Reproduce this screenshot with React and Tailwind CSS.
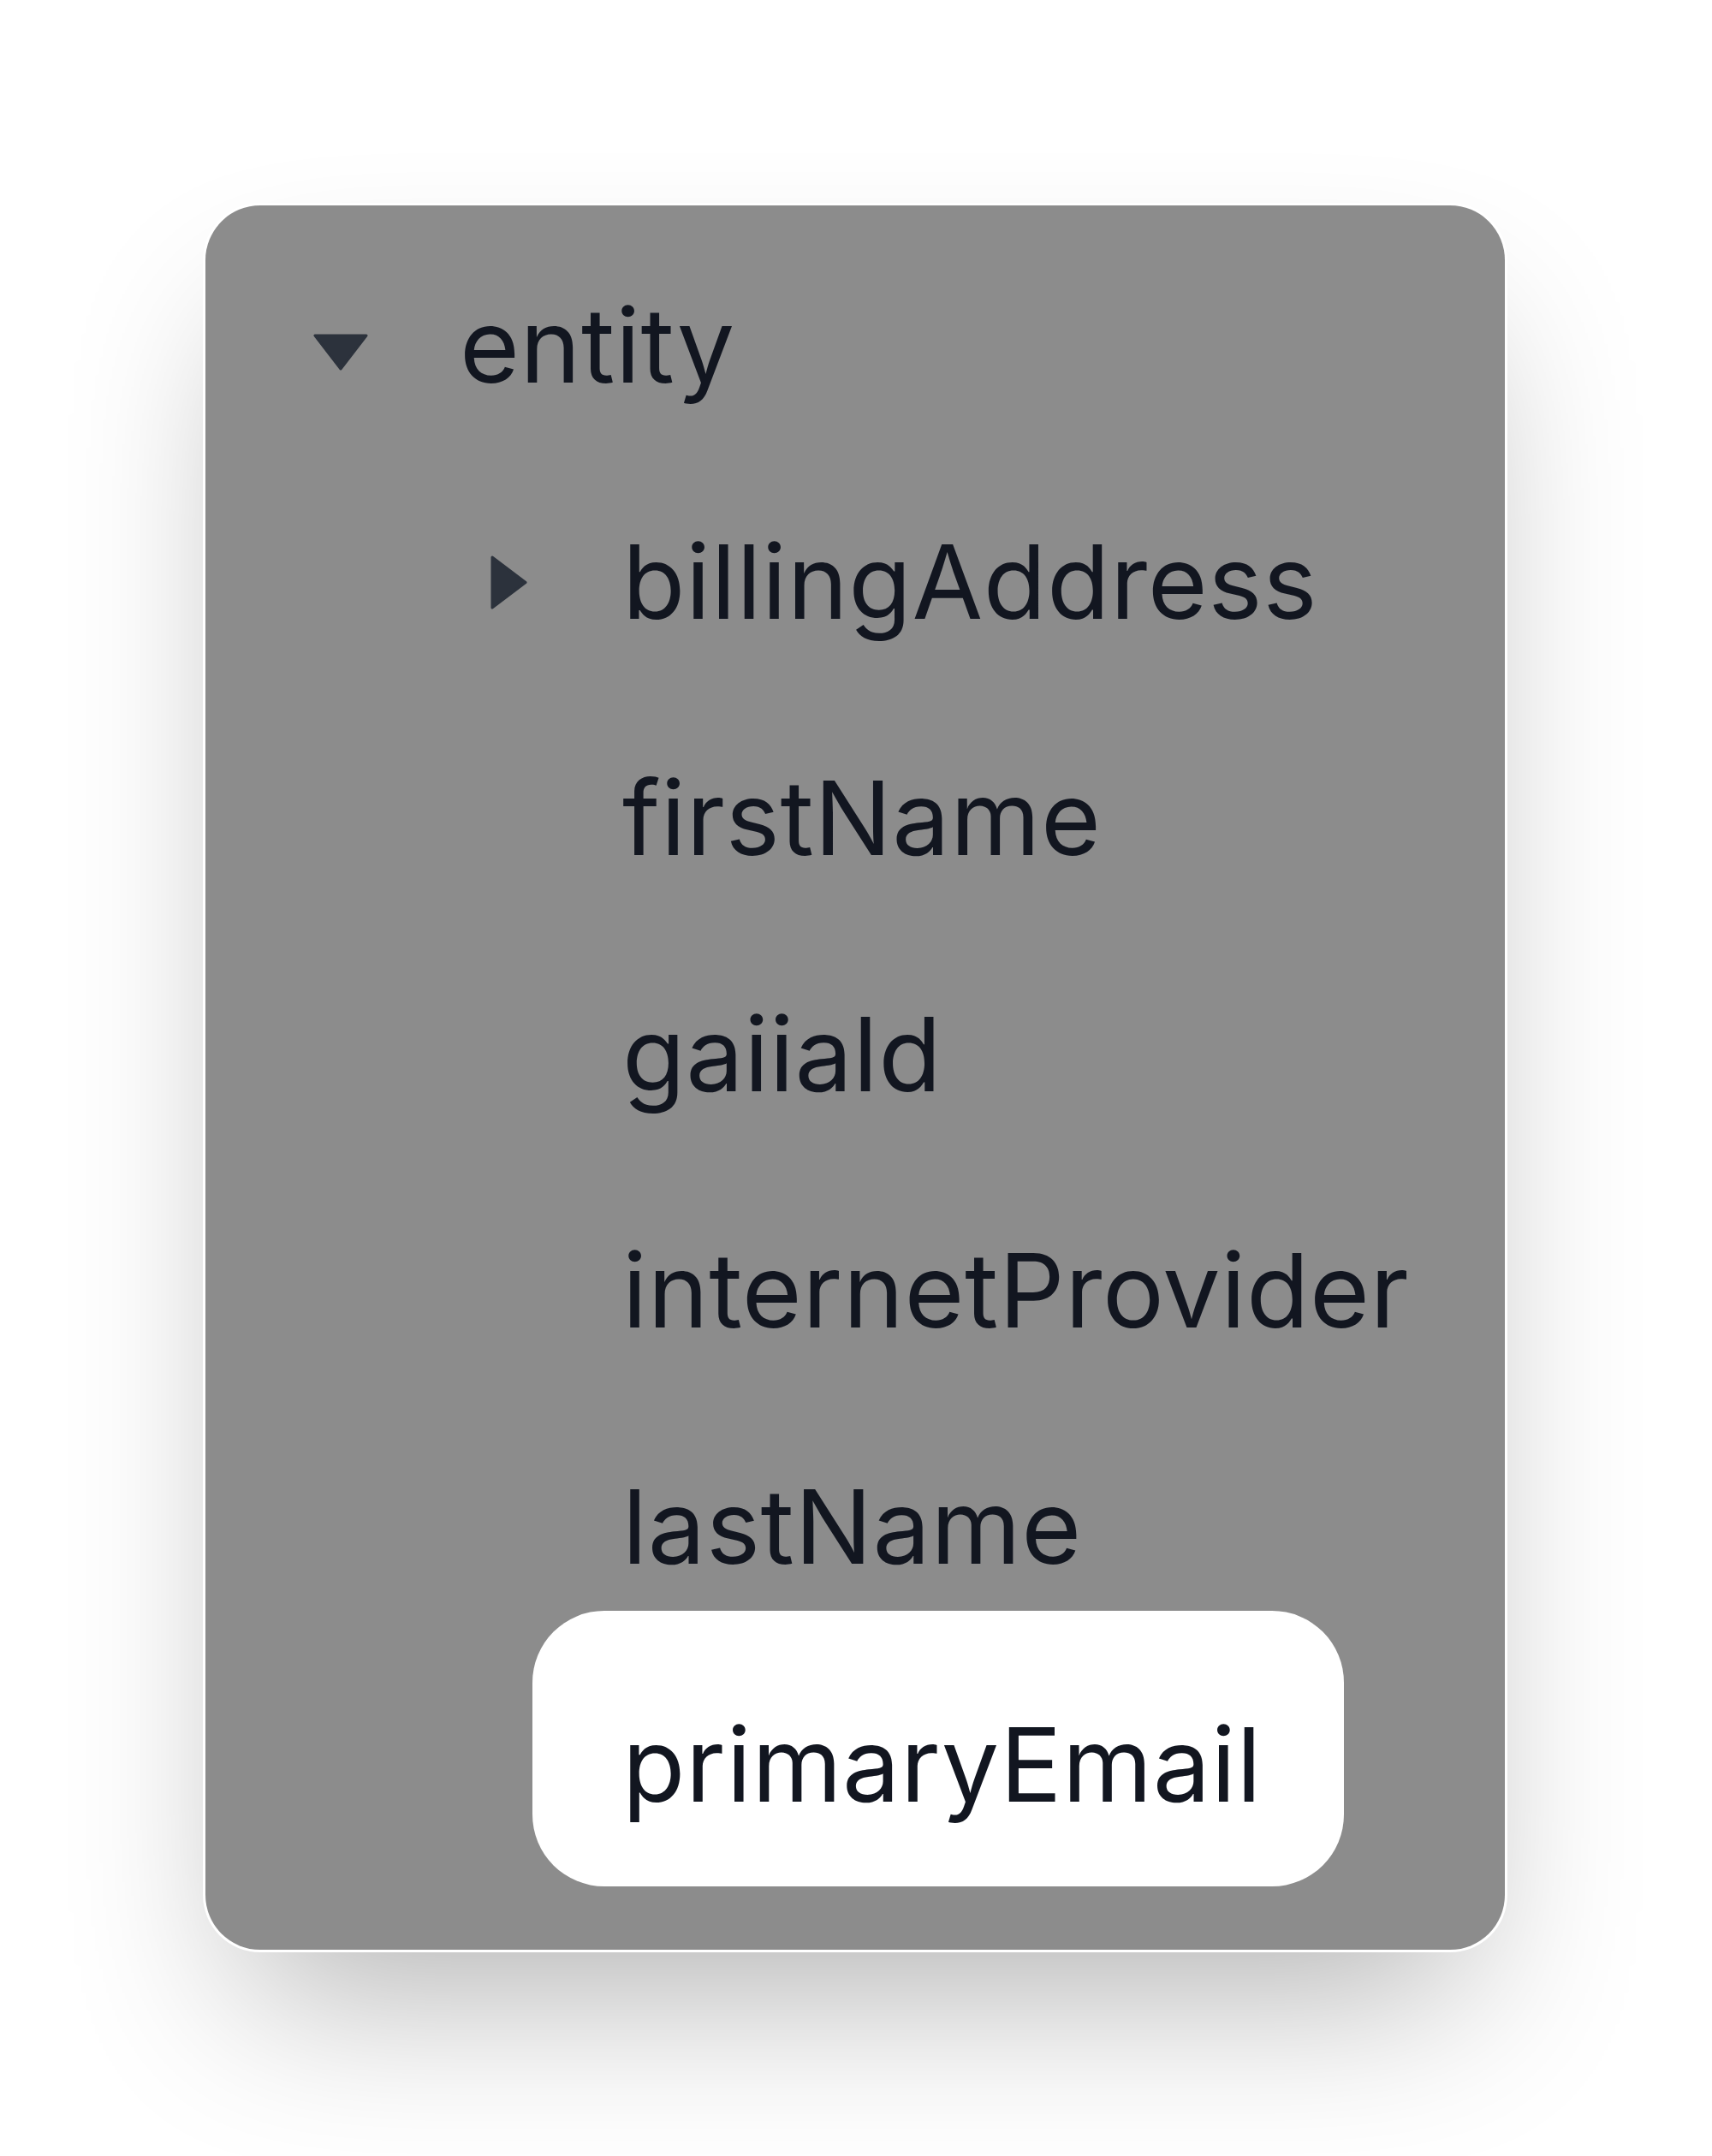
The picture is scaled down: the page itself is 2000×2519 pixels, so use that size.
import React from 'react';

const Caret = ({ open }) =>
  open ? (
    <svg width="64" height="43" viewBox="0 0 64 43" className="translate-y-[7px] shrink-0">
      <polygon points="2,2 62,2 32,41" fill="#2c323c" stroke="#2c323c" strokeWidth="3" strokeLinejoin="round" />
    </svg>
  ) : (
    <svg width="43" height="63" viewBox="0 0 43 63" className="shrink-0">
      <polygon points="2,2 41,31.5 2,61" fill="#2c323c" stroke="#2c323c" strokeWidth="3" strokeLinejoin="round" />
    </svg>
  );

const children = [
  { name: 'billingAddress', branch: true },
  { name: 'firstName' },
  { name: 'gaiiald' },
  { name: 'internetProvider' },
  { name: 'lastName' },
];

export default function App() {
  return (
    <div className="min-h-[2519px] bg-white pt-[240px] pl-[240px] font-['Inter',sans-serif] text-[120px] leading-[276px] tracking-[0.6px] text-[#121620]">
      <div className="w-[1518px] rounded-[64px] bg-[#8c8c8c] pt-[26px] pb-[74px] pl-[126px] ring-[3px] ring-white shadow-[0_100px_200px_-48px_rgba(0,0,0,0.3)]">
        <div className="flex items-center">
          <Caret open />
          <span className="ml-[107px]">entity</span>
        </div>

        <div className="flex flex-col items-start pl-[207px]">
          {children.map((c) =>
            c.branch ? (
              <div key={c.name} className="flex items-center">
                <Caret />
                <span className="ml-[111px]">{c.name}</span>
              </div>
            ) : (
              <div key={c.name} className="pl-[154px]">
                {c.name}
              </div>
            )
          )}
          <div className="-mt-[40px] ml-[49px] rounded-[84px] bg-white pl-[105px] pr-[96px] pt-[107px] pb-[70px] leading-[145px]">
            primaryEmail
          </div>
        </div>
      </div>
    </div>
  );
}
